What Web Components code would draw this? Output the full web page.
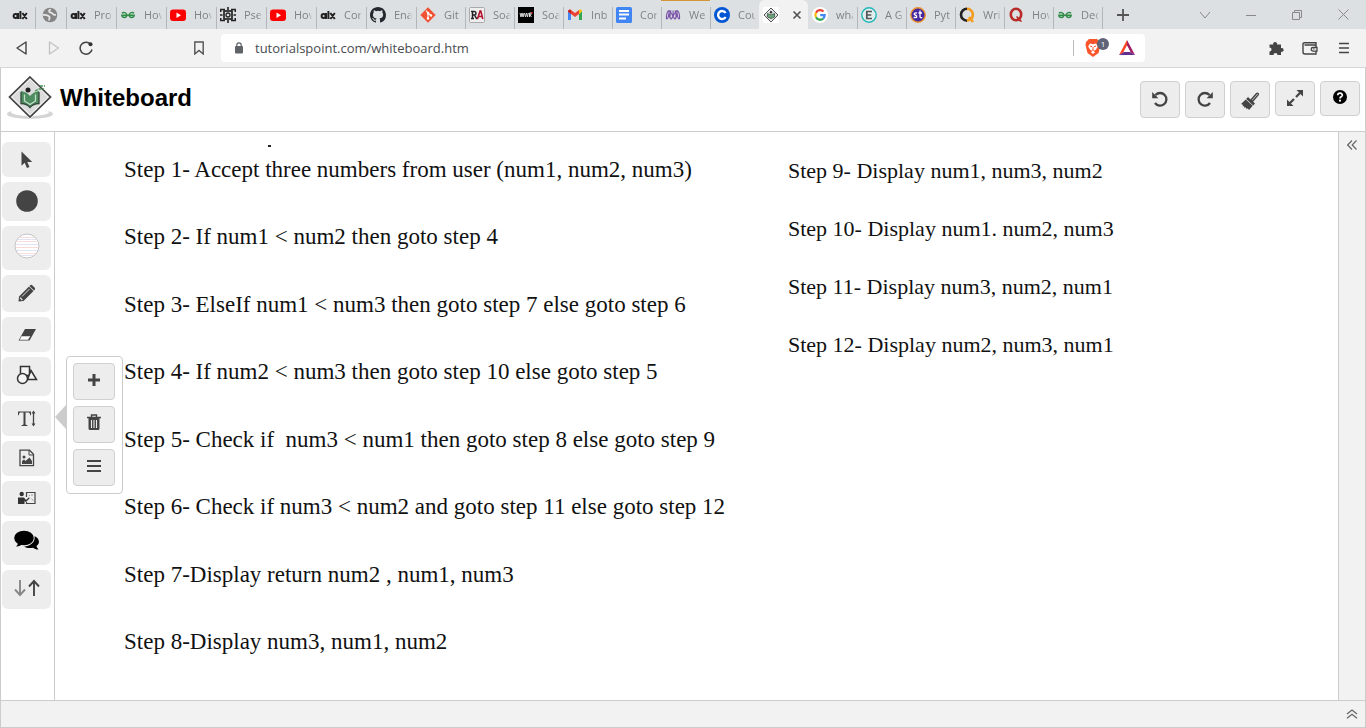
<!DOCTYPE html>
<html lang="en">
<head>
<meta charset="utf-8">
<title>Whiteboard</title>
<style>
html, body { margin: 0; height: 100%; }
body { font-family: "Liberation Sans", Arial, sans-serif; background: #fff; }
</style>
</head>
<body>
<whiteboard-window></whiteboard-window>
<script>
const define = (name, html, setup) => {
  const template = document.createElement('template');
  template.innerHTML = html;
  customElements.define(name, class extends HTMLElement {
    constructor() {
      super();
      this.attachShadow({ mode: 'open' }).append(template.content.cloneNode(true));
    }
    connectedCallback() { if (setup) setup(this, this.shadowRoot); }
  });
};

/* Each entry: [width, height, svg body]; the viewBox has the same size. */
const ICONS = {
  alx: [16, 16, '<g fill="none" stroke="#222" stroke-width="2"><circle cx="3.6" cy="9" r="2"/><path d="M6 6v6M8.4 4v8M10.4 6l4.400 6M14.800 6l-4.400 6"/></g>'],
  globe: [16, 16, '<circle cx="8" cy="8" r="7.300" fill="#858585"/><path d="M1 8c2.500-.3 5.500.3 6.500 2 .3 1.500-.5 2-.5 3.500M9 2.500C7 3 6.500 4 7.500 5s2 .2 3 1.500.8 1.800 3.500 1.300" fill="none" stroke="#e4e4e4" stroke-width="1.800"/>'],
  gfg: [16, 16, '<path d="M2 6.200c1.200-1.300 4.800-.8 4.800 1.900 0 3.200-4.600 3.200-5 .1h12.400c-.4 3.100-5 3.100-5-.1 0-2.700 3.600-3.200 4.800-1.900" fill="none" stroke="#2f8d46" stroke-width="1.500"/>'],
  youtube: [16, 16, '<rect y="2.500" width="16" height="11.500" rx="3" fill="#f00"/><path d="M6.500 5.500v5.500L11 8.200z" fill="#fff"/>'],
  chip: [16, 16, '<g fill="none" stroke="#222"><rect x="4" y="4" width="8" height="8" stroke-width="1.700"/><circle cx="8" cy="8" r="2" stroke-width="1.300"/><path d="M.7 5V2.500H5M15.300 5V2.500H11M.7 11v2.500H5M15.300 11v2.500H11M8 0v3M8 13v3M0 8h2.500M13.500 8H16" stroke-width="1.600"/></g>'],
  github: [16, 16, '<path fill="#24292f" d="M8 0C3.580 0 0 3.580 0 8c0 3.540 2.290 6.530 5.470 7.590.4.070.55-.17.55-.38v-1.490c-2.010.37-2.530-.49-2.690-.94-.09-.23-.48-.94-.82-1.130-.28-.15-.68-.52-.01-.53.63-.01 1.080.58 1.230.82.72 1.210 1.870.87 2.330.66.070-.52.28-.87.51-1.070-1.780-.2-3.640-.89-3.640-3.950 0-.87.31-1.590.82-2.150-.08-.2-.36-1.020.08-2.120 0 0 .67-.21 2.200.82a7.500 7.500 0 0 1 4 0c1.530-1.040 2.200-.82 2.200-.82.44 1.100.16 1.920.08 2.120.51.56.82 1.270.82 2.150 0 3.070-1.870 3.750-3.650 3.950.29.25.54.73.54 1.480v2.190c0 .21.15.46.55.38A8 8 0 0 0 16 8c0-4.420-3.580-8-8-8z"/>'],
  git: [16, 16, '<path d="M8 .3 15.700 8 8 15.700.3 8z" fill="#f05133"/><path d="M6 3.500l2 2.500v5M8 6l3 2.500" stroke="#fff" fill="none" stroke-width="1.200"/><circle cx="8" cy="6" r="1.200" fill="#fff"/><circle cx="11" cy="8.500" r="1.200" fill="#fff"/><circle cx="8" cy="11.500" r="1.200" fill="#fff"/>'],
  ra: [16, 16, '<rect x=".5" y=".5" width="15" height="15" rx="1" fill="#eee" stroke="#aaa"/><path d="M3.500 4v8M2 11.500h3M2 4.500h3.500c2 0 2 3.500 0 3.500H4M5.500 8l2 3.500h1" fill="none" stroke="#222" stroke-width="1.500"/><path d="M8.500 12l2.500-8h.8l2 8M9.500 9.500h4" fill="none" stroke="#b3122d" stroke-width="1.600"/>'],
  wwr: [16, 16, '<path d="M0 0h16v16H0z"/><path d="M2 6l1 4 1-4 1 4 1-4M6.500 6l1 4 1-4 1 4 .8-4M11.500 10V6h1.500v2h-1l1.500 2" fill="none" stroke="#ddd"/><path d="M13 5h1.500v1.500H13z" fill="#e33"/>'],
  gmail: [16, 16, '<path d="M1 4v9h3V7z" fill="#4285f4"/><path d="M15 4v9h-3V7z" fill="#34a853"/><path d="M1 4.500C1 2.500 3 2.300 4 3l4 3 4-3v4l-4 3-4-3-3-2.300z" fill="#ea4335"/><path d="M12 3c1-1 3-.5 3 1.500L12 7z" fill="#fbbc04"/><path d="M1 4.500C1 3 2.500 2.500 4 3v4z" fill="#c5221f"/>'],
  docs: [16, 16, '<rect width="16" height="16" rx="1.500" fill="#4285f4"/><path d="M3 4h10M3 7.500h10M3 11.500h7" stroke="#fff" stroke-width="1.800"/>'],
  mesh: [16, 16, '<g fill="none" stroke="#7952a8" stroke-width="1.100"><path d="M1.500 12C1 8 2.500 3.500 4 3.500S9 12 10 12s2.500-4 2-8.500M6 12c-1 0-1.500-4 0-8.500M6 12c1.500 0 2.500-4 2-8.500M14.500 12c.5-4-1-8.500-2.500-8.500S7 12 6 12 3.500 8 4 3.500M10 12c1-1 1.500-4 0-8.500M1.500 12c1.500.500 2.500-4 2.500-8M14.500 12c-1.500.500-2.500-4-2.500-8"/></g>'],
  coursera: [16, 16, '<circle cx="8" cy="8" r="8" fill="#0056d2"/><path d="M11.600 6A4 4 0 1 0 11.600 10" fill="none" stroke="#fff" stroke-width="2.400"/>'],
  point: [16, 16, '<path d="M0 0h16v16H0z" fill="#fff"/><path d="M8 1l7 7-7 7-7-7z" fill="#e4e4e4" stroke="#555"/><path d="M4.500 6.500L8 8l3.500-1.500v3.500L8 11.500 4.500 10z" fill="#6ca77c" stroke="#3b5343" stroke-width=".8"/><circle cx="8" cy="5.300" r="1.200" fill="#333"/>'],
  google: [16, 16, '<circle cx="8" cy="8" r="8" fill="#fff"/><g fill="none" stroke-width="2.300"><path d="M11.500 4.500A4.700 4.700 0 0 0 4 5.700" stroke="#ea4335"/><path d="M4 5.700a4.700 4.700 0 0 0 0 4.600" stroke="#fbbc05"/><path d="M4 10.300a4.700 4.700 0 0 0 7.200 1.300" stroke="#34a853"/><path d="M11.200 11.600c1-1 1.500-2 1.500-3.500H8.200" stroke="#4285f4"/></g>'],
  educative: [16, 16, '<circle cx="8" cy="8" r="7.200" fill="#e2eeee" stroke="#21b7b7" stroke-width="1.400"/><path d="M11 4.500H5.800v7H11M5.800 8h4.500" fill="none" stroke="#555" stroke-width="1.700"/>'],
  st: [16, 16, '<circle cx="8" cy="8" r="7.200" fill="#4527a0" stroke="#e9922c" stroke-width="1.400"/><path d="M7 6.200c-2-.9-3.500.5-2.300 1.500 1.800.8 2.500 1 2 2.300-.8.9-2 .7-3 .2M10 3.500v6c0 1.300 1 1.500 2.300 1M8.500 6h3.500" fill="none" stroke="#fff" stroke-width="1.300"/>'],
  quiz: [16, 16, '<path d="M8 1.700a6 6 0 0 0 0 12" fill="none" stroke="#222" stroke-width="2.600"/><path d="M8 1.700a6 6 0 0 1 4 10.300L8 13.700M10 10l4 5" fill="none" stroke="#f49c20" stroke-width="2.600"/>'],
  quora: [16, 16, '<ellipse cx="8" cy="7.500" rx="5.200" ry="5.700" fill="none" stroke="#b92b27" stroke-width="2.600"/><path d="M8.500 10c2 0 2 4.500 5 4" fill="none" stroke="#b92b27" stroke-width="2"/>'],
  x: [10, 10, '<path d="M1.500 1.500l7 7M8.500 1.500l-7 7" stroke="#555" stroke-width="1.700"/>'],
  plus: [12, 12, '<path d="M6 0v12M0 6h12" stroke="#555" stroke-width="1.800"/>'],
  chevron: [12, 12, '<path d="M1 3l5 6 5-6" fill="none" stroke="#888"/>'],
  minimize: [10, 10, '<path d="M0 5.500h10" stroke="#888"/>'],
  restore: [10, 10, '<path d="M.5 2.500h7v7h-7zM2.500 2.500v-2h7v7h-2" fill="none" stroke="#888"/>'],
  close: [11, 11, '<path d="M.5 .5l10 10M10.500.5l-10 10" stroke="#888"/>'],
  back: [14, 14, '<path d="M11 1v12L2 7z" fill="none" stroke="#444" stroke-width="1.400" stroke-linejoin="round"/>'],
  forward: [14, 14, '<path d="M2.500 1v12l9-6z" fill="none" stroke="#c4c4c4" stroke-width="1.400" stroke-linejoin="round"/>'],
  reload: [14, 14, '<path d="M11.500 3A6 6 0 1 0 13 8.500" fill="none" stroke="#444" stroke-width="1.500"/><circle cx="11.500" cy="3.300" r="2" fill="#333"/>'],
  bookmark: [12, 14, '<path d="M1.800 1h8.400v12L6 9.500 1.800 13z" fill="none" stroke="#555" stroke-width="1.400"/>'],
  lock: [10, 12, '<rect x="1" y="4" width="8" height="7.500" rx="1" fill="#5f6368"/><path d="M2.800 5V3a2.200 2.200 0 0 1 4.400 0v2" fill="none" stroke="#5f6368" stroke-width="1.200"/>'],
  shield: [16, 18, '<path d="M4 0h8l3 3 .5 3-2 8L8 18l-5.500-4L.5 6 1 3z" fill="#fb542b"/><path d="M5 4.500l3 .8 3-.8 1.800 3L11 10.500 9 12.500l1 1-2 1.500-2-1.500 1-1-2-2-1.800-3z" fill="#fff"/><path d="M5 7l2 .7M11 7L9 7.700M8 8v2.500M6.500 11.500L8 11l1.500.5" fill="none" stroke="#fb542b"/>'],
  bat: [18, 16, '<path d="M9 0L1 15l5-3 3-6z" fill="#ff4724"/><path d="M9 0l8 15-5-3-3-6z" fill="#9e1f63"/><path d="M1 15h16l-5-3H6z" fill="#662d91"/><path d="M9 5.500l3.500 6.500h-7z" fill="#fff"/>'],
  puzzle: [16, 16, '<path d="M1.500 4.500h3.700a2 2 0 1 1 3.800 0h4V8a2 2 0 1 1 0 3.800V15H9.500a2 2 0 0 0-4 0h-4v-3.500a2 2 0 0 0 0-4z" fill="#444"/>'],
  wallet: [16, 14, '<path d="M14 4V1.700H2.500a1.500 1.500 0 0 0-1.500 2V11a2 2 0 0 0 2 2h11V4H2.500" fill="none" stroke="#444" stroke-width="1.400"/><path d="M15 6.500h-4a1.800 1.800 0 0 0 0 3.600h4z" fill="#f2f2f2" stroke="#444" stroke-width="1.300"/><path d="M11 8h1.500" stroke="#444"/>'],
  menu: [10, 12, '<path d="M0 1.500h10M0 6h10M0 10.500h10" stroke="#444" stroke-width="1.500"/>'],
  logo: [48, 48, '<ellipse cx="24" cy="40" rx="23" ry="5" fill="#d4d4d4"/><ellipse cx="24" cy="38" rx="19" ry="4" fill="#fff"/><path d="M24 3l20.500 20L24 43 3.500 23z" fill="#dadada" stroke="#fff" stroke-width="3"/><path d="M24 3l20.500 20L24 43 3.500 23z" fill="#dcdcdc" stroke="#444" stroke-width="1.700"/><path d="M24 5l18 18-18 18L6 23z" fill="none" stroke="#f4f4f4"/><path d="M15 17v12c4 0 7 2 9 4.500V22c-2-2.500-5-4.500-9-5zM33 17v12c-4 0-7 2-9 4.500V22c2-2.500 5-4.500 9-5z" fill="#4c8c5e"/><path d="M15 18v11.500c4 0 7 1.500 9 4 2-2.500 5-4 9-4V18" fill="none" stroke="#344b3b" stroke-width="1.300"/><path d="M18.500 20.500v6.500l5.500 3.500 5.500-3.500v-6.500" fill="none" stroke="#c3dfca" stroke-width="1.300"/><circle cx="22" cy="16" r="2.500" fill="#222"/><path d="M29 17l4-2h5M34 12h5" stroke="#459355" stroke-width="1.300" fill="none" stroke-dasharray="3 1"/>'],
  undo: [18, 18, '<path d="M4.500 5A6.300 6.300 0 1 1 4 13" fill="none" stroke="#444" stroke-width="2.300"/><path d="M1.200 2v6.200h6.200z" fill="#444"/>'],
  redo: [18, 18, '<path d="M13.500 5A6.300 6.300 0 1 0 14 13" fill="none" stroke="#444" stroke-width="2.300"/><path d="M16.800 2v6.200h-6.200z" fill="#444"/>'],
  brush: [18, 22, '<path d="M10 12l5.500-6.500c1.300-1 2.500.3 1.500 1.600L11.500 13.500z" fill="#bbb" stroke="#444" stroke-width="1.300"/><path d="M7 9l7 6.500-1.800 2L5.200 11z" fill="#444"/><path d="M4.700 11.500l7 6.300L8 22 6.700 20.200l-.8 1.100-1.200-2-1 .8-.8-2-1.200.3.200-1.700L0 16z" fill="#444"/>'],
  expand: [18, 18, '<path d="M4 14l4-4M10 8l4-4" stroke="#444" stroke-width="2.200"/><path d="M10.500 1H17v6.500zM1 10.500V17h6.500z" fill="#444"/>'],
  help: [14, 16, '<circle cx="7" cy="7" r="7" fill="#000"/><path d="M4.700 5.300c.2-3 5-2.700 4.600.1-.3 1.500-2.300 1.400-2.300 3" fill="none" stroke="#fff" stroke-width="1.700"/><circle cx="7" cy="10.700" r="1.100" fill="#fff"/>'],
  pointer: [12, 18, '<path d="M.5.500v14.300l3.200-3 2.200 5.200 2.600-1.100-2.200-5h4.900z" fill="#444"/>'],
  color: [22, 22, '<circle cx="11" cy="11" r="10.800" fill="#444"/>'],
  lined: [26, 26, '<circle cx="13" cy="13" r="12" fill="#fff"/><path d="M6 4.500h14M3 8.500h20M2 14.500h22M4 20.500h18" stroke="#f8dcdc"/><path d="M4 6.500h18M2 11.500h22M2 17.500h22M6 22.500h14" stroke="#dfe3f2"/><circle cx="13" cy="13" r="12" fill="none" stroke="#c4c4c4"/>'],
  pencil: [18, 20, '<path d="M1 12.500L11 2.500l4.500 4.500-10 10L.5 17.500zM12 1.500c1-1 1.700-.8 2.500 0l2 2c.8.8.8 1.500 0 2.500L16 6.500 11.500 2z" fill="#444"/><path d="M4 12.500L11.500 5" stroke="#ededed" stroke-width=".9"/><path d="M2 13.700l2.300 2.300" stroke="#ededed" stroke-width="1.200"/>'],
  eraser: [20, 14, '<path d="M8 1h11l-6.500 11.500h-11z" fill="#444"/><path d="M4.500 8.200h8.800L11 11.700H2.700z" fill="#fff"/>'],
  shapes: [22, 22, '<g fill="#f4f4f4" stroke="#333" stroke-width="1.500"><path d="M4.500 1.500h9v9h-9z"/><path d="M15 5.500l5.500 9h-9z"/><circle cx="6.500" cy="13.500" r="5"/></g>'],
  text: [20, 20, '<path d="M1 2.500h13v3.800h-.8c-.3-2.200-1-2.700-2.300-2.700H8.500v11c0 1.200.5 1.600 2 1.700v.7H4.500v-.7c1.500-.1 2-.5 2-1.700v-11H4.200C2.800 3.600 2 4.100 1.800 6.300H1z" fill="#444"/><path d="M16.500 3v13" stroke="#444" stroke-width="1.300"/><path d="M14.500 4.500l2-3 2 3zM14.500 14.500l2 3 2-3z" fill="#444"/>'],
  image: [16, 20, '<path d="M1 1.200h9.500l4 4v11.500H1z" fill="#ededed" stroke="#444" stroke-width="1.300"/><path d="M10 1v5h5" fill="none" stroke="#444"/><circle cx="5" cy="8" r="1.500" fill="#444"/><path d="M3 15v-3l2-1.500 1.500 1.500 4-3.500L13 12v3z" fill="#444"/>'],
  teach: [18, 18, '<circle cx="3.700" cy="4" r="2.200" fill="#333"/><path d="M0 7.500h6l2 2.500 3-2.700.7.900L8 12l-1.500-1v3H0z" fill="#333"/><path d="M8.500 7V2.500H17v11H8.500V12" fill="none" stroke="#444" stroke-width="1.200"/><path d="M11 5.500h1M13 5h2M13.500 9l2 1.500" stroke="#999"/>'],
  chat: [26, 22, '<path d="M20.500 6c5 2.500 6 7 2 10 .2 1.500 1 2.200 2 3.500-2.500 0-4-.7-5.500-1.800-4 .8-6.500.3-8.800-1.300 6.500-.3 11.500-4.500 10.300-10.400z"/><ellipse cx="10" cy="8" rx="9.800" ry="7.300"/><path d="M4 12.500c0 2-1 3-2 4 2.500.2 5-1 6.500-2.500z"/>'],
  sort: [26, 20, '<path d="M6 1v15M1 10.500l5 5.500 5-5.500" fill="none" stroke="#888" stroke-width="1.900"/><path d="M20 17V2M15 7.500L20 2l5 5.500" fill="none" stroke="#444" stroke-width="1.900"/>'],
  add: [14, 16, '<path d="M7 1v12M1 7h12" stroke="#444" stroke-width="3"/>'],
  trash: [14, 20, '<path d="M4.500 3V1h5v2M0 3.500h14" fill="none" stroke="#444" stroke-width="1.400"/><path d="M1.500 4h11v10c0 1.500-.5 2-1.500 2H3c-1 0-1.500-.5-1.500-2z" fill="#444"/><path d="M4.500 6v8M7 6v8M9.500 6v8" stroke="#ededed" stroke-width="1.100"/>'],
  lines: [14, 16, '<path d="M0 2h14M0 7h14M0 12h14" stroke="#444" stroke-width="2"/>'],
  left2: [10, 10, '<path d="M5 .500L.7 5 5 9.500M9.500.5L5.200 5l4.300 4.500" fill="none" stroke="#666" stroke-width="1.200"/>'],
  up2: [12, 10, '<path d="M1 5l5-4 5 4M1 9.300l5-4 5 4" fill="none" stroke="#666" stroke-width="1.300"/>']
};

define('ui-icon', `<style>
  :host { display: block; flex: none; }
  svg { display: block; }
</style><div></div>`, (host, root) => {
  const [w, h, body] = ICONS[host.getAttribute('name')];
  root.querySelector('div').innerHTML =
    `<svg width="${w}" height="${h}" viewBox="0 0 ${w} ${h}" aria-hidden="true">${body}</svg>`;
});

const iconButton = (host, root, label) => {
  const button = root.querySelector('button');
  button.setAttribute('aria-label', label);
  if (!button.querySelector('ui-icon')) {
    button.insertAdjacentHTML('afterbegin', `<ui-icon name="${host.getAttribute('icon')}"></ui-icon>`);
  }
  return button;
};

/* Unframed button used in the browser frame and the panels. */
define('plain-button', `<style>
  :host { display: flex; flex: none; }
  button { flex: 1; display: flex; align-items: center; justify-content: center; padding: 0; border: 0; background: none; }
</style><button type="button"></button>`, (host, root) => iconButton(host, root, host.getAttribute('label')));

/* Grey whiteboard tool button. */
define('tool-button', `<style>
  :host { display: flex; flex: none; height: 35px; }
  :host([size="pen"]) { height: 37px; }
  :host([size="medium"]) { height: 39px; }
  :host([size="large"]) { height: 44px; }
  button { flex: 1; display: flex; align-items: center; justify-content: center; box-sizing: border-box;
    padding: 0; border: 0; border-radius: 6px; background: #ededed; }
  :host([size="medium"]) button { padding-bottom: 2px; }
  :host([size="large"]) button { padding-bottom: 4px; }
  :host([framed]) button { border: 1px solid #d0d0d0; border-radius: 4px; padding-bottom: 2px; }
</style><button type="button"></button>`, (host, root) => iconButton(host, root, host.getAttribute('label')));

define('browser-tab', `<style>
  :host { display: block; flex: none; width: 49px; position: relative; }
  :host([fit="wide"]) { width: 50px; }
  :host([fit="pinned"]) { width: 31px; }
  :host([fit="first"]) { width: 35px; }
  button { display: flex; align-items: center; gap: 8px; width: 100%; height: 100%; box-sizing: border-box; overflow: hidden;
    padding: 1px 0 0 4px; border: 0; background: linear-gradient(#b4b7ba, #b4b7ba) left bottom / 1px 22px no-repeat;
    font: 11px/16px "Open Sans", "Noto Sans", sans-serif; color: #7f8285; text-align: left; }
  :host([fit="pinned"]) button { padding-left: 7px; }
  :host([fit="first"]) button { padding-left: 12px; background: none; }
  :host([active]) button { background: #f2f2f2; border-radius: 6px 6px 0 0; gap: 13px; }
  :host([joined]) button { background: none; }
  span { width: 18px; overflow: hidden; white-space: nowrap; -webkit-mask: linear-gradient(90deg, #000 80%, transparent); }
  :host([marked])::before { content: ""; position: absolute; top: 0; left: 0; right: 0; height: 1px; background: #d2963a; }
</style><button type="button" role="tab"><span><slot></slot></span></button>`, (host, root) => {
  const button = iconButton(host, root, host.textContent || host.getAttribute('icon'));
  if (!host.textContent) root.querySelector('span').remove();
  if (host.hasAttribute('active')) button.insertAdjacentHTML('beforeend', '<ui-icon name="x"></ui-icon>');
});

define('browser-tabs', `<style>
  :host { display: flex; height: 29px; background: #dce0e3; }
  .new { width: 42px; padding-top: 1px; background: linear-gradient(#b4b7ba, #b4b7ba) left bottom / 1px 22px no-repeat; }
  .window { display: flex; margin-left: auto; }
  .window plain-button { width: 46px; }
</style>
<browser-tab fit="first" icon="alx"></browser-tab><browser-tab fit="pinned" icon="globe"></browser-tab>
<browser-tab fit="wide" icon="alx">Pro</browser-tab><browser-tab fit="wide" icon="gfg">How</browser-tab><browser-tab fit="wide" icon="youtube">How</browser-tab>
<browser-tab fit="wide" icon="chip">Pse</browser-tab><browser-tab fit="wide" icon="youtube">How</browser-tab><browser-tab fit="wide" icon="alx">Cor</browser-tab>
<browser-tab fit="wide" icon="github">Ena</browser-tab><browser-tab icon="git">Git</browser-tab>
<browser-tab icon="ra">Soa</browser-tab><browser-tab icon="wwr">Soa</browser-tab>
<browser-tab icon="gmail">Inb</browser-tab><browser-tab icon="docs">Cor</browser-tab>
<browser-tab marked icon="mesh">We</browser-tab><browser-tab icon="coursera">Cou</browser-tab>
<browser-tab active icon="point"></browser-tab>
<browser-tab joined icon="google">wha</browser-tab><browser-tab icon="educative">A G</browser-tab>
<browser-tab icon="st">Pyt</browser-tab><browser-tab icon="quiz">Wri</browser-tab>
<browser-tab icon="quora">How</browser-tab><browser-tab icon="gfg">Dec</browser-tab>
<plain-button class="new" icon="plus" label="New tab"></plain-button>
<div class="window"><plain-button icon="chevron" label="Search tabs"></plain-button><plain-button icon="minimize" label="Minimize"></plain-button><plain-button icon="restore" label="Restore"></plain-button><plain-button icon="close" label="Close"></plain-button></div>`);

define('address-bar', `<style>
  :host { display: flex; align-items: center; height: 38px; background: #f2f2f2; }
  .nav { display: flex; padding-left: 6px; }
  .nav plain-button { width: 32px; }
  .mark { width: 30px; margin-left: 82px; }
  .field { flex: 1; display: flex; align-items: center; height: 28px; margin-left: 7px; padding: 0 9px 0 13px; border-radius: 4px; background: #fff; }
  input { flex: 1; min-width: 0; height: 24px; margin-left: 11px; padding: 0; border: 0; outline: 0; background: none;
    font: 13px/20px "Open Sans", "Noto Sans", sans-serif; color: #484b4f; }
  .rule { width: 1px; height: 16px; background: #bbb; margin-right: 11px; }
  .shield { position: relative; margin-right: 17px; }
  .badge { position: absolute; left: 12px; top: -1px; width: 12px; height: 12px; border-radius: 6px; background: #5f6478;
    color: #fff; font: 8px/12px "Open Sans", sans-serif; text-align: center; }
  .menu { display: flex; margin-left: 114px; padding-right: 5px; }
  .menu plain-button { width: 34px; }
</style>
<div class="nav"><plain-button icon="back" label="Back"></plain-button><plain-button icon="forward" label="Forward"></plain-button><plain-button icon="reload" label="Reload"></plain-button></div>
<plain-button class="mark" icon="bookmark" label="Bookmark"></plain-button>
<div class="field"><ui-icon name="lock"></ui-icon><input type="text" aria-label="Address" value="tutorialspoint.com/whiteboard.htm">
<div class="rule"></div><div class="shield"><ui-icon name="shield"></ui-icon><span class="badge">1</span></div><ui-icon name="bat"></ui-icon></div>
<div class="menu"><plain-button icon="puzzle" label="Extensions"></plain-button><plain-button icon="wallet" label="Wallet"></plain-button><plain-button icon="menu" label="Menu"></plain-button></div>`);

define('board-header', `<style>
  :host { display: flex; align-items: flex-start; box-sizing: border-box; height: 64px; padding: 6px 5px 0; border-bottom: 1px solid #ccc; }
  h1 { margin: 8px 0 0 6px; font: bold 24px/32px "Liberation Sans", Arial, sans-serif; color: #000; }
  .actions { display: flex; gap: 5px; margin: 7px 0 0 auto; }
  tool-button { width: 40px; }
</style>
<ui-icon name="logo"></ui-icon><h1>Whiteboard</h1>
<div class="actions"><tool-button framed size="pen" icon="undo" label="Undo"></tool-button><tool-button framed size="pen" icon="redo" label="Redo"></tool-button><tool-button framed size="pen" icon="brush" label="Clear board"></tool-button><tool-button framed icon="expand" label="Full screen"></tool-button><tool-button framed icon="help" label="Help"></tool-button></div>`);

define('tool-sidebar', `<style>
  :host { position: relative; display: flex; flex-direction: column; gap: 5px; flex: none; box-sizing: border-box; width: 54px;
    padding: 10px 3px 0 1px; border-right: 1px solid #ccc; background: #fff; }
  .flyout { position: absolute; left: 65px; top: 224px; box-sizing: border-box; width: 57px; padding: 6px 7px 7px 6px; display: flex; flex-direction: column;
    gap: 6px; border: 1px solid #ccc; border-radius: 4px; background: #fff; }
  .flyout::before { content: ""; position: absolute; left: -12px; top: 48px; border: solid transparent; border-width: 12px 11px 12px 0; border-right-color: #ccc; }
</style>
<tool-button icon="pointer" label="Select"></tool-button><tool-button size="medium" icon="color" label="Color"></tool-button>
<tool-button size="large" icon="lined" label="Background"></tool-button><tool-button size="pen" icon="pencil" label="Pencil"></tool-button>
<tool-button icon="eraser" label="Eraser"></tool-button><tool-button size="medium" icon="shapes" label="Shapes"></tool-button>
<tool-button icon="text" label="Text"></tool-button><tool-button icon="image" label="Image"></tool-button>
<tool-button icon="teach" label="Present"></tool-button><tool-button size="large" icon="chat" label="Chat"></tool-button>
<tool-button size="medium" icon="sort" label="Transfer"></tool-button>
<div class="flyout"><tool-button framed size="pen" icon="add" label="Add text"></tool-button><tool-button framed size="pen" icon="trash" label="Delete text"></tool-button><tool-button framed size="pen" icon="lines" label="Text list"></tool-button></div>`);

define('board-canvas', `<style>
  :host { position: relative; flex: 1; min-width: 0; display: flex; padding: 24px 0 44px 69px; font-family: "Liberation Serif", "Times New Roman", serif; color: #111; }
  :host::before { content: ""; position: absolute; left: 213px; top: 13px; width: 3px; height: 2px; background: #222; }
  p { margin: 0; white-space: pre; }
  .main { width: 664px; display: flex; flex-direction: column; justify-content: space-between; gap: 12px; font-size: 23px; line-height: 28px; }
  .more { font-size: 22px; line-height: 26px; display: flex; flex-direction: column; gap: 32px; padding-top: 2px; }
</style>
<div class="main"><p>Step 1- Accept three numbers from user (num1, num2, num3)</p><p>Step 2- If num1 &lt; num2 then goto step 4</p><p>Step 3- ElseIf num1 &lt; num3 then goto step 7 else goto step 6</p><p>Step 4- If num2 &lt; num3 then goto step 10 else goto step 5</p><p>Step 5- Check if  num3 &lt; num1 then goto step 8 else goto step 9</p><p>Step 6- Check if num3 &lt; num2 and goto step 11 else goto step 12</p><p>Step 7-Display return num2 , num1, num3</p><p>Step 8-Display num3, num1, num2</p></div>
<div class="more"><p>Step 9- Display num1, num3, num2</p><p>Step 10- Display num1. num2, num3</p><p>Step 11- Display num3, num2, num1</p><p>Step 12- Display num2, num3, num1</p></div>`);

define('whiteboard-window', `<style>
  :host { display: flex; flex-direction: column; min-height: 100vh; }
  main { flex: 1; display: flex; flex-direction: column; border: 1px solid #ccc; border-top-color: #d4d6d9; }
  .body { flex: 1; display: flex; }
  .side { flex: none; box-sizing: border-box; width: 27px; border-left: 1px solid #ccc; background: #f2f2f2; padding-top: 8px; }
  footer { display: flex; align-items: center; justify-content: flex-end; box-sizing: border-box; height: 27px; padding-right: 7px; border-top: 1px solid #ccc; background: #f2f2f2; }
</style>
<browser-tabs></browser-tabs><address-bar></address-bar>
<main><board-header></board-header>
<div class="body"><tool-sidebar></tool-sidebar><board-canvas></board-canvas><div class="side"><plain-button icon="left2" label="Open side panel"></plain-button></div></div>
<footer><plain-button icon="up2" label="Open bottom panel"></plain-button></footer></main>`);
</script>
</body>
</html>
